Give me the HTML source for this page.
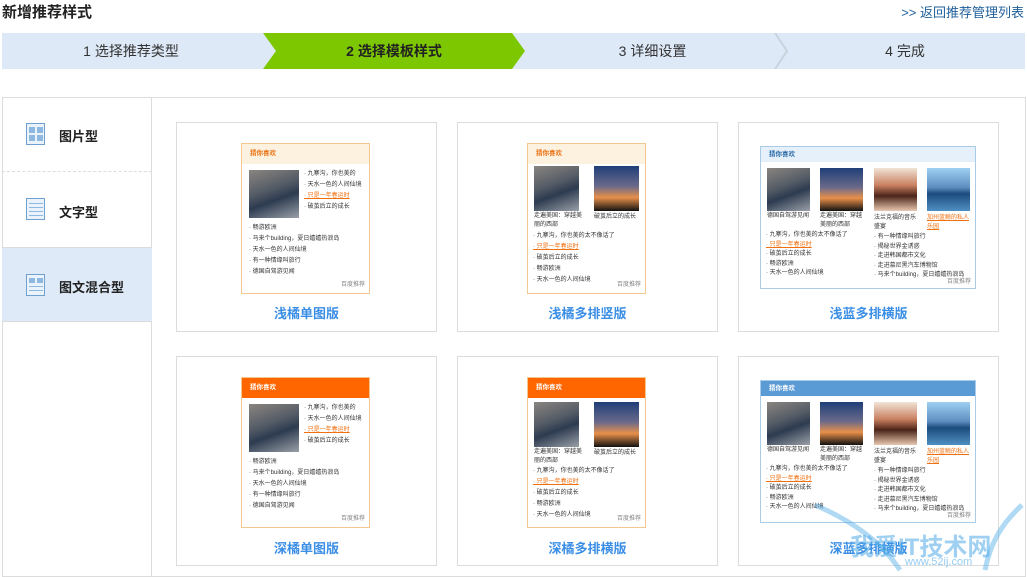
<!DOCTYPE html>
<html><head><meta charset="utf-8"><style>
*{margin:0;padding:0;box-sizing:border-box}
body{width:1027px;height:576px;overflow:hidden;background:#fff;font-family:"Liberation Sans","Noto Sans CJK SC",sans-serif;position:relative;color:#333}
.abs{position:absolute}
.title{left:2px;top:1px;font-size:15px;font-weight:bold;color:#222}
.back{right:3px;top:2px;font-size:13px;color:#1f5f9a}
.step{top:33px;height:36px;line-height:36px;font-size:14px;text-align:center;color:#333}
.card{border:1px solid #dcdcdc;width:261px;height:210px;background:#fff}
.cap{position:absolute;left:0;right:0;text-align:center;font-size:13px;font-weight:bold;color:#3a8ee6}
.w{position:absolute;background:#fff;font-size:6px;line-height:11px;color:#333}
.w .h{height:20px;line-height:20px;padding-left:8px;font-weight:bold;font-size:6.5px}
.w .img{position:absolute}
.w ul{list-style:none;position:absolute}
.w .o{color:#f07010;text-decoration:underline}
.w .f{position:absolute;right:4px;bottom:2px;color:#888}
.car{background:linear-gradient(160deg,#8a8580 0%,#555c66 40%,#2d3b50 60%,#9aa0a8 100%)}
.sun{background:linear-gradient(180deg,#1f3f78 0%,#6a6a8a 45%,#e8904a 70%,#111 100%)}
.girl{background:linear-gradient(180deg,#f1e4d6 0%,#c98060 40%,#4b2418 65%,#e8c8b0 100%)}
.br{background:linear-gradient(180deg,#9fd0f2 0%,#5d8ec0 45%,#1c4b7e 60%,#4f8fc2 100%)}
.side{left:2px;width:150px;height:75px;font-size:13px;font-weight:bold;color:#222}
.ico{position:absolute;left:24px;top:26px;width:19px;height:22px;border:1px solid #6fa0d0;background:#eaf3fb}
.ico i{position:absolute;background:#8fb8e0}
</style></head><body>
<div class="abs title">新增推荐样式</div>
<div class="abs back">&gt;&gt; 返回推荐管理列表</div>

<div class="abs step" style="left:2px;width:1023px;background:#dde9f7"></div>
<svg class="abs" style="left:0;top:33px" width="1027" height="36">
<polygon points="263,0 512,0 525,18 512,36 263,36 276,18" fill="#7cc700"/>
<polyline points="775,0 787,18 775,36" fill="none" stroke="#c8d3de" stroke-width="2"/>
</svg>
<div class="abs step" style="left:2px;width:258px">1 选择推荐类型</div>
<div class="abs step" style="left:263px;width:262px;font-weight:bold;color:#222">2 选择模板样式</div>
<div class="abs step" style="left:525px;width:255px">3 详细设置</div>
<div class="abs step" style="left:785px;width:240px">4 完成</div>

<div class="abs" style="left:2px;top:97px;width:1024px;height:480px;border:1px solid #dcdcdc"></div>
<div class="abs" style="left:151px;top:97px;width:1px;height:480px;background:#dcdcdc"></div>
<div class="abs side" style="top:97px;border-bottom:1px dashed #ddd"><div class="ico"><i style="left:2px;top:3px;width:6px;height:6px"></i><i style="left:10px;top:3px;width:6px;height:6px"></i><i style="left:2px;top:11px;width:6px;height:6px"></i><i style="left:10px;top:11px;width:6px;height:6px"></i></div><span class="abs" style="left:57px;top:29px">图片型</span></div>
<div class="abs side" style="top:172px"><div class="ico"><i style="left:2px;top:4px;width:14px;height:1px"></i><i style="left:2px;top:8px;width:14px;height:1px"></i><i style="left:2px;top:12px;width:14px;height:1px"></i><i style="left:2px;top:16px;width:14px;height:1px"></i></div><span class="abs" style="left:57px;top:30px">文字型</span></div>
<div class="abs side" style="top:247px;background:#deeaf8;border-top:1px solid #dcdcdc;border-bottom:1px solid #dcdcdc"><div class="ico"><i style="left:2px;top:3px;width:6px;height:5px"></i><i style="left:10px;top:3px;width:6px;height:5px"></i><i style="left:2px;top:11px;width:14px;height:1px"></i><i style="left:2px;top:15px;width:14px;height:1px"></i></div><span class="abs" style="left:57px;top:29px">图文混合型</span></div>

<div class="abs card" style="left:176px;top:122px"><div class="cap" style="top:180px">浅橘单图版</div></div>
<div class="abs card" style="left:457px;top:122px"><div class="cap" style="top:180px">浅橘多排竖版</div></div>
<div class="abs card" style="left:738px;top:122px"><div class="cap" style="top:180px">浅蓝多排横版</div></div>
<div class="abs card" style="left:176px;top:356px"><div class="cap" style="top:181px">深橘单图版</div></div>
<div class="abs card" style="left:457px;top:356px"><div class="cap" style="top:181px">深橘多排横版</div></div>
<div class="abs card" style="left:738px;top:356px"><div class="cap" style="top:181px">深蓝多排横版</div></div>

<div class="w" style="left:241px;top:143px;width:129px;height:151px;border:1px solid #f3c890">
 <div class="h" style="background:#fdf1e0;color:#e87010">猜你喜欢</div>
 <div class="img car" style="left:7px;top:26px;width:50px;height:48px"></div>
 <ul style="left:62px;top:25px"><li>· 九寨沟，你也美的</li><li>· 天水一色的人间仙境</li><li class="o">· 只是一年春运时</li><li>· 破茧后立的成长</li></ul>
 <ul style="left:7px;top:79px"><li>· 畅游欧洲</li><li>· 马来个building，夏日嬉嬉热浪岛</li><li>· 天水一色的人间仙境</li><li>· 有一种情缘叫旅行</li><li>· 德国自驾游见闻</li></ul>
 <div class="f">百度推荐</div>
</div>
<div class="w" style="left:241px;top:377px;width:129px;height:151px;border:1px solid #f3c890">
 <div class="h" style="background:#ff6600;color:#fff">猜你喜欢</div>
 <div class="img car" style="left:7px;top:26px;width:50px;height:48px"></div>
 <ul style="left:62px;top:25px"><li>· 九寨沟，你也美的</li><li>· 天水一色的人间仙境</li><li class="o">· 只是一年春运时</li><li>· 破茧后立的成长</li></ul>
 <ul style="left:7px;top:79px"><li>· 畅游欧洲</li><li>· 马来个building，夏日嬉嬉热浪岛</li><li>· 天水一色的人间仙境</li><li>· 有一种情缘叫旅行</li><li>· 德国自驾游见闻</li></ul>
 <div class="f">百度推荐</div>
</div>

<div class="w" style="left:527px;top:143px;width:119px;height:151px;border:1px solid #f3c890">
 <div class="h" style="background:#fdf1e0;color:#e87010">猜你喜欢</div>
 <div class="img car" style="left:6px;top:22px;width:45px;height:45px"></div>
 <div class="img sun" style="left:66px;top:22px;width:45px;height:45px"></div>
 <div class="abs" style="left:6px;top:68px;width:50px;line-height:9px">走遍美国：穿越美丽的西部</div>
 <div class="abs" style="left:66px;top:68px">破茧后立的成长</div>
 <ul style="left:5px;top:87px"><li>· 九寨沟，你也美的太不像话了</li><li class="o">· 只是一年春运时</li><li>· 破茧后立的成长</li><li>· 畅游欧洲</li><li>· 天水一色的人间仙境</li></ul>
 <div class="f">百度推荐</div>
</div>
<div class="w" style="left:527px;top:377px;width:119px;height:151px;border:1px solid #f3c890">
 <div class="h" style="background:#ff6600;color:#fff">猜你喜欢</div>
 <div class="img car" style="left:6px;top:24px;width:45px;height:45px"></div>
 <div class="img sun" style="left:66px;top:24px;width:45px;height:45px"></div>
 <div class="abs" style="left:6px;top:70px;width:50px;line-height:9px">走遍美国：穿越美丽的西部</div>
 <div class="abs" style="left:66px;top:70px">破茧后立的成长</div>
 <ul style="left:5px;top:88px"><li>· 九寨沟，你也美的太不像话了</li><li class="o">· 只是一年春运时</li><li>· 破茧后立的成长</li><li>· 畅游欧洲</li><li>· 天水一色的人间仙境</li></ul>
 <div class="f">百度推荐</div>
</div>

<div class="w" style="left:760px;top:146px;width:216px;height:143px;border:1px solid #a8cbe8">
 <div class="h" style="background:#e6f0fa;color:#2a6aa8;height:15px;line-height:15px">猜你喜欢</div>
 <div class="img car" style="left:6px;top:21px;width:43px;height:43px"></div>
 <div class="img sun" style="left:59px;top:21px;width:43px;height:43px"></div>
 <div class="img girl" style="left:113px;top:21px;width:43px;height:43px"></div>
 <div class="img br" style="left:166px;top:21px;width:43px;height:43px"></div>
 <div class="abs" style="left:6px;top:65px;width:46px;line-height:9px">德国自驾游见闻</div>
 <div class="abs" style="left:59px;top:65px;width:46px;line-height:9px">走遍美国：穿越美丽的西部</div>
 <div class="abs" style="left:113px;top:67px;width:46px;line-height:9px">法兰克福的音乐盛宴</div>
 <div class="abs o" style="left:166px;top:67px;width:46px;line-height:9px">加州蓝鲸的私人乐园</div>
 <ul style="left:5px;top:84px;line-height:9.5px"><li>· 九寨沟，你也美的太不像话了</li><li class="o">· 只是一年春运时</li><li>· 破茧后立的成长</li><li>· 畅游欧洲</li><li>· 天水一色的人间仙境</li></ul>
 <ul style="left:113px;top:86px;line-height:9.5px"><li>· 有一种情缘叫旅行</li><li>· 揭秘世界金诱惑</li><li>· 走进韩国都市文化</li><li>· 走进慕尼黑汽车博物馆</li><li>· 马来个building，夏日嬉嬉热浪岛</li></ul>
 <div class="f" style="bottom:0">百度推荐</div>
</div>
<div class="w" style="left:760px;top:380px;width:216px;height:143px;border:1px solid #a8cbe8">
 <div class="h" style="background:#5b9bd5;color:#fff;height:15px;line-height:15px">猜你喜欢</div>
 <div class="img car" style="left:6px;top:21px;width:43px;height:43px"></div>
 <div class="img sun" style="left:59px;top:21px;width:43px;height:43px"></div>
 <div class="img girl" style="left:113px;top:21px;width:43px;height:43px"></div>
 <div class="img br" style="left:166px;top:21px;width:43px;height:43px"></div>
 <div class="abs" style="left:6px;top:65px;width:46px;line-height:9px">德国自驾游见闻</div>
 <div class="abs" style="left:59px;top:65px;width:46px;line-height:9px">走遍美国：穿越美丽的西部</div>
 <div class="abs" style="left:113px;top:67px;width:46px;line-height:9px">法兰克福的音乐盛宴</div>
 <div class="abs o" style="left:166px;top:67px;width:46px;line-height:9px">加州蓝鲸的私人乐园</div>
 <ul style="left:5px;top:84px;line-height:9.5px"><li>· 九寨沟，你也美的太不像话了</li><li class="o">· 只是一年春运时</li><li>· 破茧后立的成长</li><li>· 畅游欧洲</li><li>· 天水一色的人间仙境</li></ul>
 <ul style="left:113px;top:86px;line-height:9.5px"><li>· 有一种情缘叫旅行</li><li>· 揭秘世界金诱惑</li><li>· 走进韩国都市文化</li><li>· 走进慕尼黑汽车博物馆</li><li>· 马来个building，夏日嬉嬉热浪岛</li></ul>
 <div class="f" style="bottom:0">百度推荐</div>
</div>

<svg class="abs" style="left:810px;top:500px" width="217" height="76">
<path d="M5,5 C40,20 70,40 90,70" fill="none" stroke="rgba(80,170,230,0.45)" stroke-width="5"/>
<path d="M212,5 C190,25 180,45 175,70" fill="none" stroke="rgba(80,170,230,0.45)" stroke-width="5"/>
</svg>
<div class="abs" style="left:850px;top:527px;font-size:24px;font-weight:bold;color:rgba(80,170,230,0.55)">我爱IT技术网</div>
<div class="abs" style="left:905px;top:556px;font-size:11px;color:rgba(80,170,230,0.6)">www.52ij.com</div>
</body></html>
